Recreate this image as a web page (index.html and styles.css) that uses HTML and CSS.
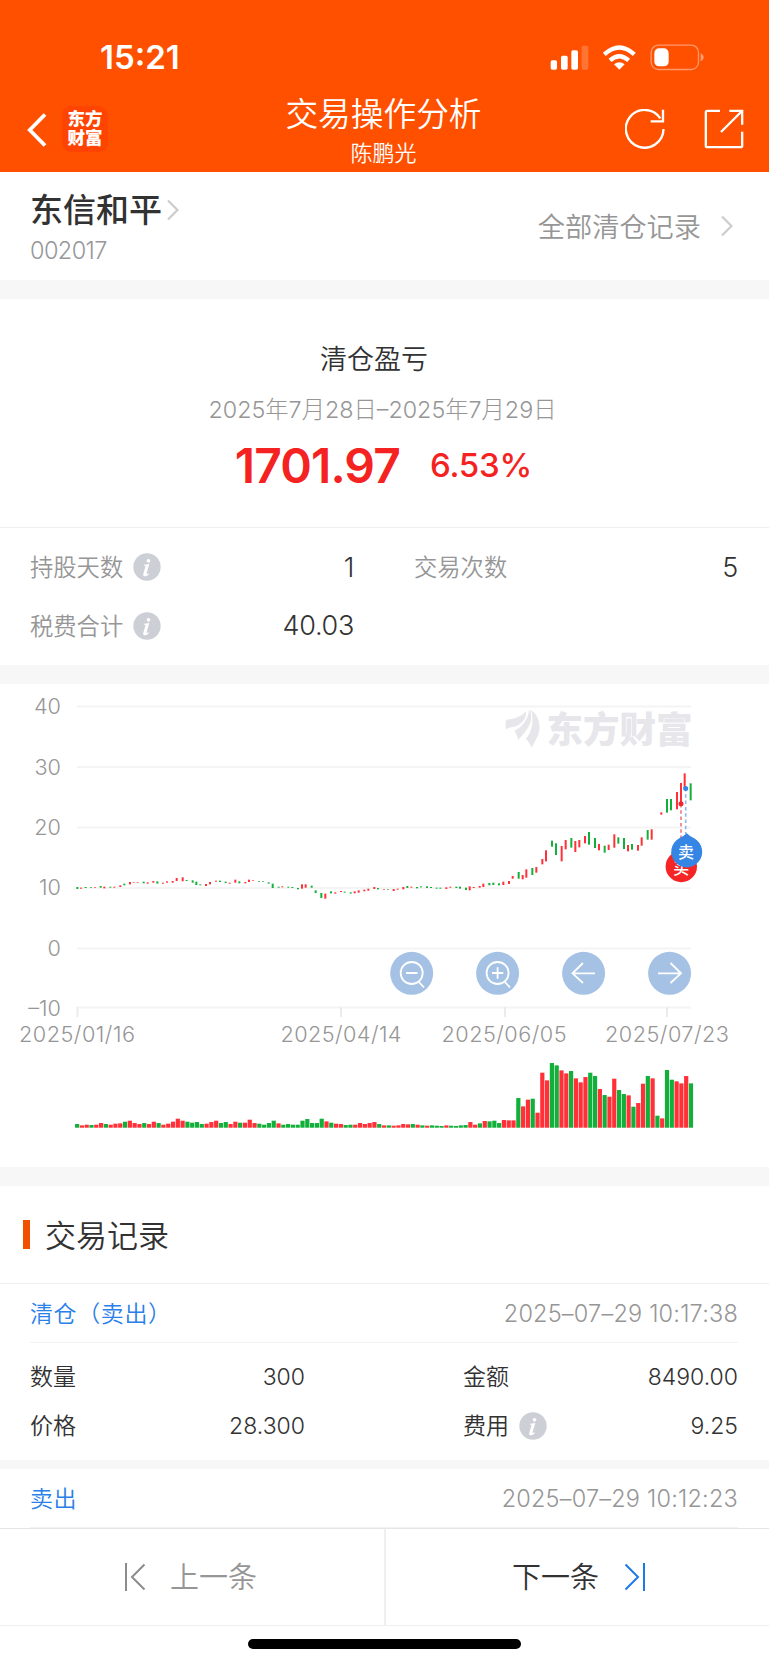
FILE: index.html
```html
<!DOCTYPE html>
<html lang="zh-CN">
<head>
<meta charset="utf-8">
<title>交易操作分析</title>
<link rel="stylesheet" href="styles.css">
</head>
<body>
<header class="top">
  <div class="status">
    <span class="time">15:21</span>
    <svg class="status-icons" viewBox="490 125 480 90" fill="#fff">
      <rect x="498" y="180" width="19" height="28" rx="5"/>
      <rect x="529" y="166" width="20" height="42" rx="5"/>
      <rect x="560" y="150" width="20" height="58" rx="5"/>
      <rect x="591" y="136" width="20" height="72" rx="5" opacity=".2"/>
      <g fill="none" stroke="#fff" stroke-width="13">
        <path d="M659 162Q704 121 749 162"/>
        <path d="M676 180Q704 155 732 180"/>
      </g>
      <path d="M688 192Q704 179 720 192L704 208Z"/>
      <rect x="799.500" y="134.500" width="142" height="73" rx="22" fill="none" stroke="#fff" stroke-width="4" opacity=".42"/>
      <path d="M948 159Q957 163 957 171T948 183Z" opacity=".45"/>
      <rect x="809" y="144" width="43" height="54" rx="14"/>
    </svg>
  </div>
  <nav class="nav">
    <div class="nav-left">
      <svg class="back" viewBox="0 0 20 34" fill="none" stroke="#fff" stroke-width="3.800"><path d="M18 1.500L2.800 17L18 32.500"/></svg>
      <span class="logo"><span>东方</span><span>财富</span></span>
    </div>
    <div class="titles">
      <h1 class="title">交易操作分析</h1>
      <p class="subtitle">陈鹏光</p>
    </div>
    <div class="nav-right">
      <svg class="nav-icon" viewBox="0 0 120 120" fill="none" stroke="#fff" stroke-width="7">
        <path d="M115.500 60A56.500 56.500 0 1 1 106 28"/><path d="M114 2V37H77"/>
      </svg>
      <svg class="nav-icon" viewBox="0 0 120 120" fill="none" stroke="#fff" stroke-width="7">
        <path d="M48 5.500H10Q5.500 5.500 5.500 10V110Q5.500 114.500 10 114.500H110Q114.500 114.500 114.500 110V68"/>
        <path d="M76 5.500H114.500V47M114 6L51 69"/>
      </svg>
    </div>
  </nav>
</header>

<section class="stock">
  <div>
    <div class="stock-name">东信和平<svg class="chev" viewBox="0 0 12 22"><path d="M1 1.500L10.500 11L1 20.500"/></svg></div>
    <div class="stock-code">002017</div>
  </div>
  <div class="all-records"><span>全部清仓记录</span><svg class="chev" viewBox="0 0 12 22"><path d="M1 1.500L10.500 11L1 20.500"/></svg></div>
</section>

<section class="profit">
  <h2 class="profit-title">清仓盈亏</h2>
  <p class="profit-date">2025年7月28日–2025年7月29日</p>
  <p class="profit-value"><b class="amount">1701.97</b><b class="percent">6.53%</b></p>
</section>

<section class="stats">
  <div class="stat"><span class="label">持股天数</span><svg class="info"><use href="#info"/></svg><span class="num">1</span></div>
  <div class="stat"><span class="label">交易次数</span><span class="num">5</span></div>
  <div class="stat"><span class="label">税费合计</span><svg class="info"><use href="#info"/></svg><span class="num">40.03</span></div>
</section>

<section class="chart-box">
  <svg class="chart" viewBox="0 684 769 482">
    <g class="grid">
      <path d="M77 706.500H691M77 767H691M77 827.500H691M77 888H691M77 948.500H691M77 1007.500H691"/>
      <path class="ticks" d="M77.500 1007V1017M341 1007V1017M505 1007V1017M667 1007V1017"/>
    </g>
    <g transform="translate(480 690) scale(.33333)" fill="#e6e6eb">
      <path d="M78 119C76 105 76 95 80 89C100 88 125 80 138 64C142 90 115 110 98 111C90 112 82 114 78 119Z"/>
      <path d="M103 122C125 112 143 92 147 62Q151 57 152 66C160 105 135 125 115 150C112 140 108 130 103 122Z"/>
      <path d="M154 60C180 80 185 115 172 140C165 155 160 162 155 173C150 162 145 152 137 146C155 130 162 95 154 60Z"/>
    </g>
    <text class="watermark" x="546.500" y="742.500" textLength="146">东方财富</text>
    <g class="axis" text-anchor="end">
      <text x="61" y="714">40</text><text x="61" y="774.500">30</text><text x="61" y="834.500">20</text>
      <text x="61" y="895">10</text><text x="61" y="955.500">0</text><text x="61" y="1015.500">–10</text>
    </g>
    <g class="axis">
      <text x="19" y="1042" textLength="116">2025/01/16</text>
      <text x="280.500" y="1042" textLength="121">2025/04/14</text>
      <text x="441.500" y="1042" textLength="125">2025/06/05</text>
      <text x="605" y="1042" textLength="124">2025/07/23</text>
    </g>
    <g id="candles"></g>
    <g id="volumes"></g>
    <path d="M681 804V852" stroke="#f69097" stroke-width="2" stroke-dasharray="3.500 2.800"/>
    <path d="M685.700 790V834" stroke="#8fb7ea" stroke-width="1.600" stroke-dasharray="3.500 2.800" stroke-dashoffset="2"/>
    <circle cx="681" cy="803.700" r="2.500" fill="#f5222d"/>
    <circle cx="685.700" cy="788.500" r="2.500" fill="#3585e5"/>
    <circle cx="681.300" cy="866.500" r="15.700" fill="#f52525"/>
    <text class="pin" x="681.300" y="873.500">买</text>
    <path d="M686.700 833.300Q690 836.500 694.500 838.500A15.500 15.500 0 1 1 678.900 838.500Q683.500 836.500 686.700 833.300Z" fill="#3585e5"/>
    <text class="pin" x="686" y="858">卖</text>
    <g fill="#a5c2e5">
      <circle cx="411.700" cy="973.300" r="21.500"/><circle cx="497.600" cy="973.300" r="21.500"/>
      <circle cx="583.600" cy="973.300" r="21.500"/><circle cx="669.600" cy="973.300" r="21.500"/>
    </g>
    <g fill="none" stroke="#fff" stroke-width="1.800">
      <circle cx="411.700" cy="973" r="11"/><path d="M406 973H417.500M418 981L424 987.500"/>
      <circle cx="497.600" cy="973" r="11"/><path d="M492 973H503.300M497.600 967.300V978.700M504 981L510 987.500"/>
      <path d="M595 973.300H572.500M583 963L572.500 973.300L583 983"/>
      <path d="M658 973.300H680.500M670.500 963L681 973.300L670.500 983"/>
    </g>
  </svg>
</section>

<section class="records">
  <h2 class="records-title"><span>交易记录</span></h2>
  <div class="record-head"><span class="side">清仓（卖出）</span><time>2025–07–29 10:17:38</time></div>
  <div class="record-body">
    <div class="cell"><span class="key">数量</span><span class="num">300</span></div>
    <div class="cell"><span class="key">金额</span><span class="num">8490.00</span></div>
    <div class="cell"><span class="key">价格</span><span class="num">28.300</span></div>
    <div class="cell"><span class="key">费用</span><svg class="info"><use href="#info"/></svg><span class="num">9.25</span></div>
  </div>
  <div class="record-head second"><span class="side">卖出</span><time>2025–07–29 10:12:23</time></div>
</section>

<footer class="pager">
  <div class="page prev"><svg class="page-icon" viewBox="0 0 22 28"><path d="M2 0V28M20.500 1.500L8 14L20.500 26.500"/></svg><span>上一条</span></div>
  <div class="page next"><span>下一条</span><svg class="page-icon" viewBox="0 0 22 28"><path d="M20 0V28M1.500 1.500L14 14L1.500 26.500"/></svg></div>
</footer>
<div class="home"><span class="home-bar"></span></div>

<svg width="0" height="0" class="defs">
  <symbol id="info" viewBox="0 0 84 84">
    <circle cx="42" cy="42" r="41" fill="#cccfd5"/>
    <circle cx="46.500" cy="23.500" r="5.500" fill="#fff"/>
    <path d="M33 35Q41 35 49 32L41 60Q40 66 49 60Q44 70 36 70Q29 70 31 62L38 38H33Z" fill="#fff"/>
  </symbol>
</svg>
<script src="chart.js"></script>
</body>
</html>
```
FILE: styles.css
```css
* { box-sizing: border-box; margin: 0; padding: 0; }
body {
  width: 769px; height: 1665px; overflow: hidden; background: #fff; color: #323233;
  font-family: Inter, "Noto Sans CJK SC", sans-serif; font-weight: 350;
  display: flex; flex-direction: column;
}
svg { display: block; flex: none; }
.defs { position: absolute; }

.top { height: 172px; background: #ff5000; color: #fff; }
.status { height: 80px; padding: 40px 61px 0 100px; display: flex; justify-content: space-between; }
.time { font-size: 33px; font-weight: 600; line-height: 34px; }
.status-icons { width: 160px; height: 30px; margin-top: 2px; }
.nav { height: 92px; padding: 0 25px 0 27px; display: grid; grid-template-columns: 259px 195px 1fr; }
.nav-left { display: flex; align-items: center; gap: 15px; padding-bottom: 1px; }
.back { width: 20px; height: 34px; margin-top: 8px; }
.logo {
  width: 46px; height: 46px; margin-top: 7px; border-radius: 9px; background: #ff4300;
  display: flex; flex-direction: column; align-items: center; justify-content: center;
  font-size: 17.500px; line-height: 19px; font-weight: 900; padding-bottom: 2px;
}
.titles { display: flex; flex-direction: column; align-items: center; padding-top: 14px; }
.title { font-size: 32.700px; line-height: 40px; font-weight: 350; white-space: nowrap; }
.subtitle { font-size: 22px; line-height: 30px; padding-top: 4px; }
.nav-right { display: flex; justify-content: flex-end; gap: 39px; padding-top: 29px; }
.nav-icon { width: 40px; height: 40px; }

.stock {
  height: 127px; padding: 18px 36px 0 30px; border-bottom: 19px solid #f7f7f7;
  display: flex; justify-content: space-between;
}
.stock-name { display: flex; align-items: center; gap: 5px; font-size: 33px; line-height: 40px; font-weight: 500; }
.chev { width: 12px; height: 22px; fill: none; stroke: #ccc; stroke-width: 2.200; }
.stock-code { font-size: 23.500px; line-height: 30px; margin-top: 6px; font-weight: 300; color: #969799; letter-spacing: -.6px; }
.all-records { display: flex; align-items: center; height: 40px; gap: 20px; margin-top: 16px; font-size: 27.200px; color: #969696; }
.all-records span { padding-bottom: 3px; }

.profit { height: 229px; padding-top: 41px; text-align: center; border-bottom: 1px solid #efefef; }
.profit-title { font-size: 27px; line-height: 40px; font-weight: 350; margin-left: -21px; }
.profit-date { font-size: 23.300px; line-height: 30px; margin: 15px 0 0 -4px; font-weight: 300; color: #969696; }
.profit-value { display: flex; justify-content: center; align-items: center; gap: 30px; height: 56px; margin: 12px 0 0 -2px; color: #f52222; }
.amount { font-size: 48px; font-weight: 600; letter-spacing: -.9px; }
.percent { font-size: 33px; font-weight: 550; letter-spacing: -.2px; }

.stats {
  height: 156px; padding: 10px 31px 0 30px; border-bottom: 19px solid #f7f7f7;
  display: grid; grid-template-columns: 324px 324px; grid-auto-rows: 58.500px; column-gap: 60px;
}
.stat, .cell { display: flex; align-items: center; }
.label { font-size: 23.300px; color: #969696; padding-bottom: 2px; }
.info { width: 28px; height: 28px; margin-left: 10px; }
.num { margin-left: auto; }
.stat .num { font-size: 27px; letter-spacing: -.3px; }

.chart-box { height: 502px; border-bottom: 19px solid #f7f7f7; }
.chart { width: 769px; height: 482px; }
.grid { fill: none; stroke: #f4f4f4; stroke-width: 2; }
.ticks { stroke: #ebebeb; }
.watermark { font-size: 36.500px; font-weight: 900; fill: #e6e6eb; }
.axis { font-size: 21.700px; fill: #969696; font-weight: 300; }
.pin { font-size: 16px; font-weight: 500; fill: #fff; text-anchor: middle; }
.up { fill: #ff3038; }
.down { fill: #12b03a; }

.records-title {
  height: 98px; display: flex; align-items: center; gap: 15px; padding-left: 23px;
  border-bottom: 1px solid #efefef; font-size: 31px; font-weight: 350;
}
.records-title::before { content: ""; width: 7px; height: 29px; background: #f05000; }
.records-title span { padding-bottom: 3px; }
.record-head {
  height: 59px; margin: 0 31px 0 30px; display: flex; align-items: center; justify-content: space-between;
  border-bottom: 1px solid #f2f2f2; font-size: 23px;
}
.side { color: #2b7fe8; letter-spacing: .6px; padding-bottom: 3px; }
.record-head time { font-size: 23.500px; letter-spacing: .2px; font-weight: 300; color: #969696; }
.record-body {
  height: 126px; padding: 9px 31px 0 30px; border-bottom: 9px solid #f7f7f7; font-size: 23px;
  display: grid; grid-template-columns: 275px 275px; grid-auto-rows: 49px; column-gap: 158px;
}
.key { padding-bottom: 3px; }

.pager { height: 98px; display: flex; border-top: 1px solid #e6e6e6; border-bottom: 1px solid #efefef; font-size: 29px; }
.page { display: flex; align-items: center; }
.page span { padding-bottom: 4px; }
.prev { width: 384px; padding-left: 124px; gap: 24px; color: #969696; }
.next { flex: 1; padding-left: 126px; gap: 25px; border-left: 2px solid #efefef; }
.page-icon { width: 22px; height: 28px; fill: none; stroke: #8c8c8c; stroke-width: 2; }
.next .page-icon { stroke: #1f78ea; }
.home { display: flex; justify-content: center; padding-top: 13px; }
.home-bar { width: 273px; height: 10px; border-radius: 5px; background: #000; }
```
FILE: chart.js
```js
const NS = 'http://www.w3.org/2000/svg';
function bar(parent, x, y, w, h, up) {
  const r = document.createElementNS(NS, 'rect');
  r.setAttribute('x', x); r.setAttribute('y', y);
  r.setAttribute('width', w); r.setAttribute('height', h);
  r.setAttribute('class', up ? 'up' : 'down');
  parent.appendChild(r);
}

// Candles: direction, centre, top, bottom, in thirds of a pixel from each group's origin.
const candleGroups = [
  [0, 680, 'g232 621 627,r243 623 626,g257 621 624,g273 621 623,r285 621 623,g302 618 623,r313 620 625,g331 620 623,r343 620 623,r361 616 621,g373 611 616,r390 606 613,r401 606 608,r413 606 608,g431 605 610,r443 607 611,r460 603 608,g472 604 611,r489 608 611,r501 604 608,r518 603 608,r530 594 603,r548 592 604,g560 600 603,g578 601 608,g589 605 615,g601 613 616,r618 612 618,r630 606 613,r648 602 605,g660 602 606,g677 605 609,r689 608 611,r706 599 608,g718 604 610,r736 606 610,r747 599 606,r759 600 602,g777 603 605,g789 603 605,g806 607 611,g818 611 624,g836 620 623,r847 619 622,g865 620 623,g877 621 624,g894 624 628,r906 613 626,r917 613 623,g935 617 623,g947 631 639,g964 639 654,r976 641 656,g993 634 640,r1006 637 641,r1023 633 636,g1034 635 638,g1052 637 641,r1064 634 640,r1076 631 638,r1093 629 634,r1105 626 632,r1123 621 627,g1134 624 628,r1152 627 629,g1164 627 629'],
  [390, 860, 'r11 87 93,r23 86 89,r40 81 88,g52 78 84,r64 80 83,g81 81 85,g93 79 82,g111 79 84,g123 81 84,g140 83 86,g151 83 86,r169 82 87,r181 80 83,g199 80 84,g210 80 86,g228 83 90,r239 79 91,r251 81 84,r269 78 83,r280 71 81,g298 69 76,g310 68 75,g327 70 76,r340 65 75,r357 63 72'],
  [480, 690, 'r98 558 566,g116 546 566,r128 555 568,r139 538 563,g157 534 555,r169 531 548,r187 507 523,r198 481 514,g216 452 470,g228 460 495,r245 468 514,r257 450 478,g274 444 473,r286 453 486,r298 450 472,r315 438 460,g327 426 464,g345 444 474,r357 462 481,g374 467 488,r386 464 480,r403 433 473,g415 442 461,g432 444 477,r444 465 484,g456 462 479,r474 465 482,r485 442 467,g503 420 449,r515 418 449,r544 367 374,g561 327 368,g573 327 361,r591 306 358,r603 279 345,r614 250 295,g632 280 331']
];
const candles = document.getElementById('candles');
for (const [ox, oy, list] of candleGroups) {
  for (const c of list.split(',')) {
    const [x, t, b] = c.slice(1).split(' ').map(Number);
    bar(candles, ox + x / 3 - 1, oy + t / 3, 2, (b - t) / 3, c[0] === 'r');
  }
}

// Volumes: direction and height, in thirds of a pixel.
const volumes = 'g11 r7 r9 g8 r9 r14 g11 r9 r12 r13 g18 r21 r14 r11 g14 r11 r18 g14 r9 r12 r18 r27 r21 g18 g15 g17 g11 r12 r17 r21 g14 g17 r11 r18 g15 r15 r24 r14 g12 g9 g14 g21 r13 g9 g11 g9 g9 g21 g26 g14 g14 g27 r19 g15 r12 r11 g8 g9 r9 r14 r11 r14 r17 g11 r7 g7 r6 r7 r11 r10 g11 r9 g7 r6 g7 g6 g5 r7 g6 g5 g7 g8 r17 r9 g13 r20 g19 g21 g14 r23 r22 r22 g89 r64 r84 g87 r45 r165 r142 g194 g187 r172 r163 g170 r148 r136 r152 g165 g155 r116 g98 r93 r147 g113 g101 r97 g63 r74 r132 g155 r148 g36 r28 g173 g144 r139 r133 r155 g133'.split(' ');
const group = document.getElementById('volumes');
volumes.forEach((v, i) => {
  const h = v.slice(1) / 3;
  bar(group, 75 + i * 4.796, 1127.700 - h, 4.200, h, v[0] === 'r');
});
```
